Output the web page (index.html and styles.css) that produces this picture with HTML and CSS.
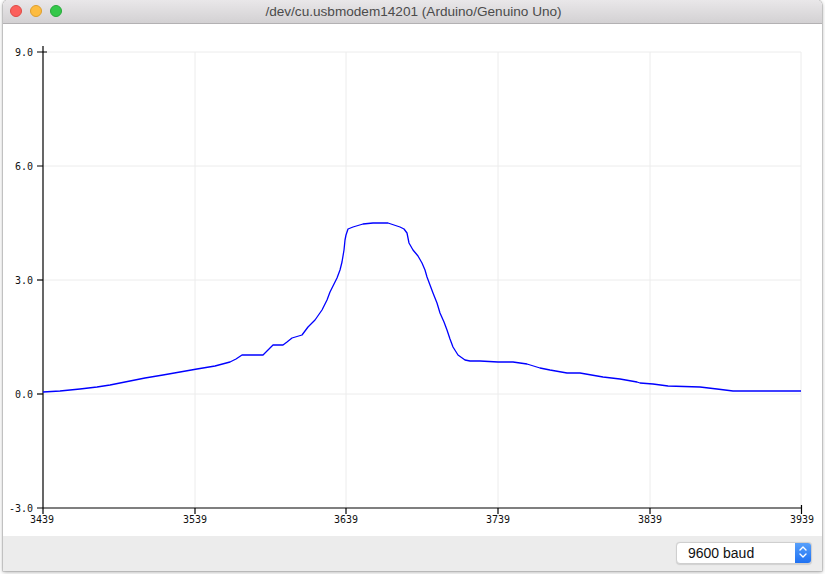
FILE: index.html
```html
<!DOCTYPE html>
<html>
<head>
<meta charset="utf-8">
<link rel="stylesheet" href="styles.css">
</head>
<body>
<div class="window">
  <div class="titlebar">
    <div class="lights">
      <span class="light red"></span>
      <span class="light yellow"></span>
      <span class="light green"></span>
    </div>
    <div class="title">/dev/cu.usbmodem14201 (Arduino/Genuino Uno)</div>
  </div>
  <div class="plot">
    <svg class="chart" width="819" height="512" viewBox="3 24 819 512" xmlns="http://www.w3.org/2000/svg">
      <g class="grid">
        <line x1="43" y1="52" x2="801" y2="52"/>
        <line x1="43" y1="166" x2="801" y2="166"/>
        <line x1="43" y1="280" x2="801" y2="280"/>
        <line x1="43" y1="394" x2="801" y2="394"/>
        <line x1="195" y1="52" x2="195" y2="508"/>
        <line x1="346" y1="52" x2="346" y2="508"/>
        <line x1="498" y1="52" x2="498" y2="508"/>
        <line x1="650" y1="52" x2="650" y2="508"/>
        <line x1="801" y1="52" x2="801" y2="508"/>
      </g>
      <g class="axis">
        <line x1="43" y1="46" x2="43" y2="514"/>
        <line x1="37" y1="508" x2="802" y2="508"/>
        <line x1="37" y1="52" x2="47" y2="52"/>
        <line x1="37" y1="166" x2="43" y2="166"/>
        <line x1="37" y1="280" x2="43" y2="280"/>
        <line x1="37" y1="394" x2="43" y2="394"/>
        <line x1="195" y1="508" x2="195" y2="514"/>
        <line x1="346" y1="508" x2="346" y2="514"/>
        <line x1="498" y1="508" x2="498" y2="514"/>
        <line x1="650" y1="508" x2="650" y2="514"/>
        <line x1="801.5" y1="505" x2="801.5" y2="514"/>
      </g>
      <g class="ylabels">
        <text x="33" y="55.5">9.0</text>
        <text x="33" y="169.5">6.0</text>
        <text x="33" y="283.5">3.0</text>
        <text x="33" y="397.5">0.0</text>
        <text x="33" y="511.5">-3.0</text>
      </g>
      <g class="xlabels">
        <text x="42" y="523">3439</text>
        <text x="195" y="523">3539</text>
        <text x="346" y="523">3639</text>
        <text x="498" y="523">3739</text>
        <text x="650" y="523">3839</text>
        <text x="802" y="523">3939</text>
      </g>
      <polyline class="trace" points="43,392 60,391 80,389 97,387 110,385 125,382 145,378 163,375 180,372 197,369 215,366 230,362 236,359 242,355 263,355 268,350 273,345 283,345 287,342 292,338 302,335 308,327 315,320 322,310 327,300 330,292 333,286 337,278 340,270 342,262 344,250 345,240 346,235 348,229 353,227 363,224 373,223 388,223 400,227 404,229 407,233 408,238 409,243 413,250 418,256 422,263 425,270 427,277 430,285 433,293 437,303 440,313 444,322 447,330 450,339 453,347 458,355 465,360 470,361 480,361 498,362 513,362 520,363 527,364 540,368 550,370 567,373 580,373 603,377 620,379 637,382 640,383 653,384 668,386 700,387 717,389 733,391 777,391 801,391"/>
    </svg>
  </div>
  <div class="bottombar">
    <div class="select">
      <span class="select-text">9600 baud</span>
      <span class="stepper">
        <svg width="16" height="22" viewBox="0 0 16 22" xmlns="http://www.w3.org/2000/svg">
          <polyline points="5,9 8,6 11,9" fill="none" stroke="#fff" stroke-width="1.4" stroke-linecap="round" stroke-linejoin="round"/>
          <polyline points="5,13 8,16 11,13" fill="none" stroke="#fff" stroke-width="1.4" stroke-linecap="round" stroke-linejoin="round"/>
        </svg>
      </span>
    </div>
  </div>
</div>
</body>
</html>
```
FILE: styles.css
```css
html, body {
  margin: 0;
  padding: 0;
}
body {
  width: 825px;
  height: 574px;
  background: #ffffff;
  overflow: hidden;
  font-family: "Liberation Sans", Arial, sans-serif;
}
.window {
  margin: 0 3px 3px 3px;
  height: 571px;
  display: flex;
  flex-direction: column;
  background: #ffffff;
  border-radius: 5px 5px 0 0;
  box-shadow: 0 0 0 0.5px #a8a8a8, 0 1px 4px rgba(0, 0, 0, 0.35);
  overflow: hidden;
}
.titlebar {
  height: 23px;
  flex: none;
  display: flex;
  align-items: center;
  position: relative;
  background: linear-gradient(#e9e7e9, #d3d1d3);
  border-bottom: 1px solid #b3b1b3;
}
.lights {
  display: flex;
  gap: 8px;
  padding-left: 7px;
  position: absolute;
  left: 0;
  top: 5px;
}
.light {
  width: 12px;
  height: 12px;
  border-radius: 50%;
  box-sizing: border-box;
}
.red { background: #fc605c; border: 0.5px solid #de4a45; }
.yellow { background: #fdbc40; border: 0.5px solid #dd9e2d; }
.green { background: #34c84a; border: 0.5px solid #27a83a; }
.title {
  flex: 1;
  text-align: center;
  font-size: 13.6px;
  color: #4b4b4b;
  padding-left: 2px;
}
.plot {
  height: 512px;
  flex: none;
  background: #ffffff;
}
.chart {
  display: block;
}
.grid line {
  stroke: #ececec;
  stroke-width: 1;
}
.axis line {
  stroke: #000;
  stroke-width: 1.2;
}
.ylabels text, .xlabels text {
  font-family: "DejaVu Sans Mono", monospace;
  font-size: 10px;
  fill: #111;
}
.ylabels text { text-anchor: end; }
.xlabels text { text-anchor: middle; }
.trace {
  fill: none;
  stroke: #0000ff;
  stroke-width: 1.3;
  stroke-linejoin: round;
}
.bottombar {
  flex: 1;
  background: #ececec;
  display: flex;
  justify-content: flex-end;
  align-items: center;
  padding-right: 10px;
}
.select {
  width: 136px;
  height: 22px;
  box-sizing: border-box;
  display: flex;
  align-items: center;
  background: #fff;
  border: 1px solid #cfcfcf;
  border-radius: 4px;
  box-shadow: 0 0.5px 1px rgba(0,0,0,0.12);
  overflow: hidden;
  margin-top: -2px;
}
.select-text {
  flex: 1;
  padding-left: 11px;
  font-size: 14px;
  color: #111;
}
.stepper {
  width: 16px;
  height: 22px;
  flex: none;
  display: flex;
  background: linear-gradient(#5aa2fb, #1c6ff2);
}
.stepper svg { display: block; margin-top: -1px; }
```
